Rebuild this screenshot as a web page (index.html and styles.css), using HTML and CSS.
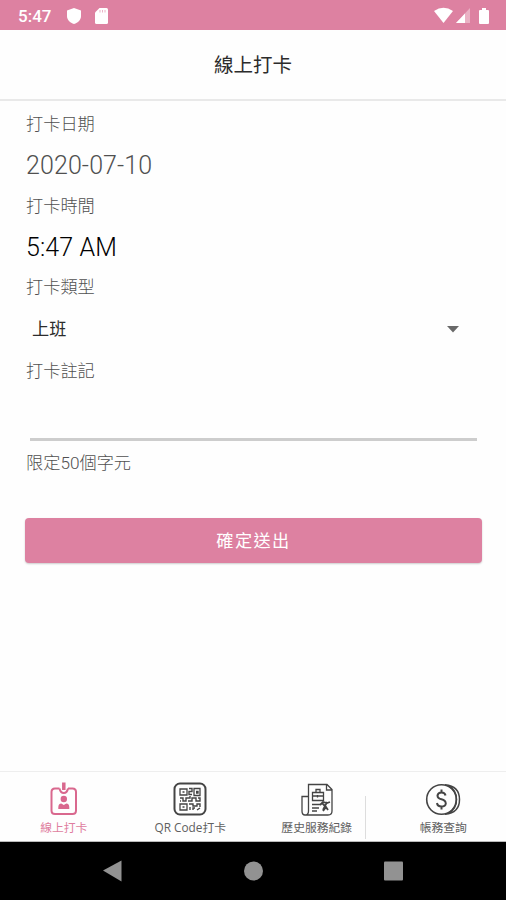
FILE: index.html
```html
<!DOCTYPE html>
<html lang="zh-Hant">
<head>
<meta charset="utf-8">
<title>線上打卡</title>
<link rel="stylesheet" href="styles.css">
</head>
<body>
<div class="status">
  <span class="clock">5:47</span>
  <svg class="shield" width="14" height="16" viewBox="0 0 14 16"><path d="M7 0 14 2.600V8c0 4-3 6.800-7 8C3 14.800 0 12 0 8V2.600Z" fill="#fff"/></svg>
  <svg class="sd" width="13" height="16" viewBox="0 0 13 16"><path d="M4.500 0H11.500Q13 0 13 1.500V14.500Q13 16 11.500 16H1.500Q0 16 0 14.500V4.500Z" fill="#fff"/><path d="M5 2v2.500M7.500 2v2.500M10 2v2.500" stroke="#dd81a1" stroke-opacity=".6"/></svg>
  <svg class="signals" width="58" height="18" viewBox="0 0 58 18"><path d="M0 4Q9.500-2.500 19 4L9.500 16Z" fill="#fff"/><path d="M36 1V16H22Z" fill="#fff" opacity=".38"/><path d="M31 6.500V16H22Z" fill="#fff"/><path d="M48 1h4v2h2q1 0 1 1v12q0 1-1 1h-8q-1 0-1-1V4q0-1 1-1h2Z" fill="#fff"/></svg>
</div>
<header class="title">線上打卡</header>
<main class="form">
  <div class="label">打卡日期</div>
  <div class="value date">2020-07-10</div>
  <div class="label">打卡時間</div>
  <div class="value">5:47 AM</div>
  <div class="label">打卡類型</div>
  <div class="select"><span>上班</span><svg width="12" height="7" viewBox="0 0 12 7"><path d="M0 0H12L6 6.500Z" fill="#696969"/></svg></div>
  <div class="label">打卡註記</div>
  <div class="input"></div>
  <div class="hint">限定50個字元</div>
  <button class="submit">確定送出</button>
</main>
<nav class="tabs">
  <div class="tab active">
    <svg width="28" height="34" viewBox="0 0 28 34" fill="none" stroke="#d9688e" stroke-width="2"><path d="M9.500 6.500H5Q1.500 6.500 1.500 10V28.500Q1.500 32 5 32H22.500Q26 32 26 28.500V10Q26 6.500 22.500 6.500H18M9.500 6.500q1 4.500 4.300 4.500T18 6.500"/><path d="M13.800 .5V8" stroke-width="3.500"/><circle cx="13.800" cy="17" r="3.200" fill="#d9688e" stroke="none"/><path d="M8.300 27v-1.500q0-4 3-4l2.500 1.500 2.500-1.500q3 0 3 4V27Z" fill="#d9688e" stroke="none"/></svg>
    <span>線上打卡</span>
  </div>
  <div class="tab">
    <svg width="34" height="34" viewBox="0 0 34 34" fill="none" stroke="#444"><rect x="1.500" y="1.500" width="31" height="31" rx="5.500" stroke-width="2"/><path d="M7 7h7v6H7ZM21 6.500h6v7h-6ZM7 22h7v6H7Z" stroke-width="1.300"/><path d="M9.500 10h2M23 9.500h2v1.500h-2M9.500 25h2M16 6.500h3v3h-3v3h3M7 16h3v3h3v-3h4v-2M15 19h4v-3h4v3h4v-3h-2M16 22h4v2h4v-2h3v3M17 25v3M20 28v-2h2M24 28l3-2M7 19h1" stroke-width="1.400"/></svg>
    <span class="latin">QR Code打卡</span>
  </div>
  <div class="tab history">
    <svg width="32" height="33" viewBox="0 0 32 33" fill="none" stroke="#444" stroke-width="1.300"><path d="M7.500 28V1.500H26L31 6.500V28q0 4-4 4H4q-3 0-3-4V13.500h6.500V28q0 4-3.500 4M25.500 1.500V7H31"/><path d="M11.500 9.500h11v8h-11ZM15 9.500V6.500h4v3M11.500 13h11M16.500 12v2.500M11 21.500h8M11 25h7M11 28h5"/><path d="M19 22l3-3 4 1 3-1M21 20l4 4-3 4M26 19l-4 8M25 24l2 3" stroke-width="1.800"/></svg>
    <span>歷史服務紀錄</span>
  </div>
  <div class="tab">
    <svg width="36" height="33" viewBox="0 0 36 33" fill="none" stroke="#444"><circle cx="16.500" cy="16.500" r="14.800" stroke-width="1.600"/><path d="M20 1.700Q34.500 3 34.500 16.500T20 31.300M24 3Q31.500 7.500 31.500 16.500T24 30" stroke-width="1.500"/><path d="M20.500 12.500Q20 9.500 16.500 9.500T12.500 12.500Q12.500 15.500 16.500 16.300T20.800 20.500Q20.500 23.500 16.500 23.500T12 20M16.500 6.500v3M16.500 23.500v3" stroke-width="2"/></svg>
    <span>帳務查詢</span>
  </div>
</nav>
<footer class="sysnav">
  <svg width="506" height="58" viewBox="0 0 506 58"><path d="M103 28.500 121.500 18.500V39.500Z" fill="#929292"/><circle cx="253.500" cy="29" r="9.500" fill="#929292"/><rect x="384" y="19.500" width="19" height="19" rx="1" fill="#929292"/></svg>
</footer>
</body>
</html>
```
FILE: styles.css
```css
* { box-sizing: border-box; }
body {
  margin: 0;
  width: 506px;
  height: 900px;
  display: flex;
  flex-direction: column;
  background: #fefefe;
  font-family: Roboto, "Noto Sans CJK TC", sans-serif;
  overflow: hidden;
}
svg { display: block; flex: none; }
.status {
  height: 30px;
  display: flex;
  align-items: center;
  padding: 1px 14px 0 18px;
  background: #dd81a1;
  color: #fff;
}
.clock { width: 49px; font-size: 17px; font-weight: 500; }
.sd { margin-left: 14px; }
.signals { margin-left: auto; }
.title {
  height: 71px;
  padding-top: 1px;
  border-bottom: 2px solid #e9e9e9;
  text-align: center;
  font-size: 19.500px;
  line-height: 70px;
  color: #2c2c2c;
}
.form { flex: 1; padding: 8px 24px 0 26px; }
.label, .hint {
  height: 30px;
  line-height: 30px;
  font-size: 17.200px;
  font-weight: 300;
  color: #505050;
}
.value {
  height: 51.500px;
  line-height: 53px;
  font-size: 25px;
  font-weight: 350;
  letter-spacing: .1px;
  color: #000;
}
.date { color: #505050; }
.select {
  height: 54px;
  display: flex;
  align-items: center;
  justify-content: space-between;
  padding: 0 23px 0 6px;
  font-size: 17.200px;
  color: #2c2c2c;
}
.select span { margin-top: -3px; }
.input {
  height: 55px;
  margin: 0 5px 0 4px;
  border-bottom: 3px solid #cdcdcd;
}
.hint { height: 77px; line-height: 44px; }
.submit {
  display: block;
  width: 457px;
  height: 45px;
  margin-left: -1px;
  padding: 0;
  border: 0;
  border-radius: 4px;
  background: #dd81a1;
  box-shadow: 0 1px 2px #0003;
  color: #fff;
  font: 400 17.200px/46px Roboto, "Noto Sans CJK TC", sans-serif;
  letter-spacing: 1.400px;
}
.tabs {
  height: 71px;
  display: grid;
  grid-template-columns: repeat(4, 1fr);
  border-top: 1px solid #eee;
  border-bottom: 1px solid #bbb;
}
.tab {
  position: relative;
  display: flex;
  flex-direction: column;
  align-items: center;
  justify-content: flex-end;
  padding: 0 0 4px 1px;
  font-size: 11.800px;
  line-height: 18px;
  color: #606060;
  white-space: nowrap;
}
.tab svg { margin-bottom: 3px; }
.active { color: #df7d9f; }
.latin {
  margin-top: -1px;
  margin-bottom: 1px;
  font-family: "Open Sans", "Noto Sans CJK TC", sans-serif;
}
.history::after {
  content: "";
  position: absolute;
  left: 112px;
  top: 24px;
  width: 1px;
  height: 43px;
  background: #ddd;
}
.sysnav { height: 58px; background: #000; }
```
